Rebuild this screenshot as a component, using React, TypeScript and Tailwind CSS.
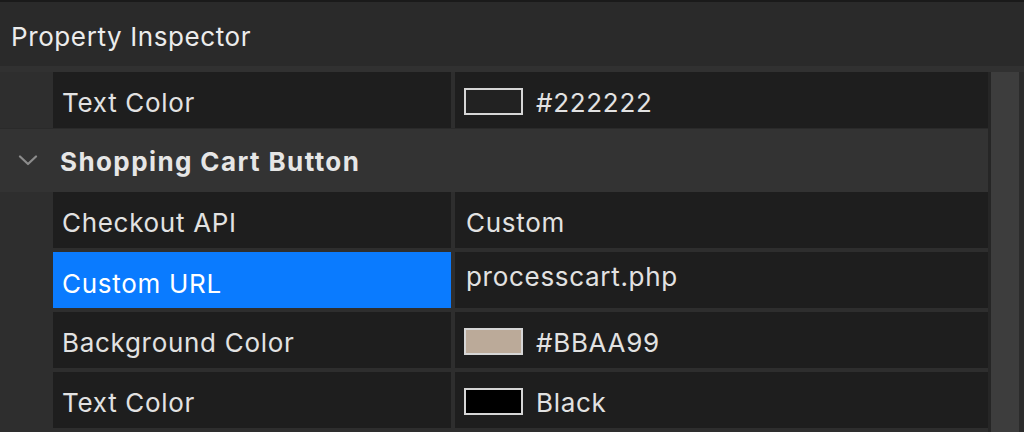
import React from 'react';

type Row = {
  label: string;
  value: string;
  swatch?: string;
  selected?: boolean;
};

const font = { fontFamily: 'Inter, "Noto Sans", sans-serif' };

function PropRow({ label, value, swatch, selected }: Row) {
  return (
    <div className="flex h-[56px]">
      <div className="w-[53px] shrink-0" />
      <div
        className={
          'w-[398px] shrink-0 flex items-center pl-[9px] text-[26px] tracking-[0.7px] ' +
          (selected ? 'bg-[#0a7bff] text-white pt-[6px]' : 'bg-[#1e1e1e] text-[#e2e2e2] pt-[5px]')
        }
      >
        {label}
      </div>
      <div className="w-[4px] shrink-0" />
      <div
        className={
          'flex-1 bg-[#1e1e1e] flex items-center pl-[9px] text-[26px] tracking-[0.7px] text-[#e2e2e2] ' +
          (selected ? 'pb-[8px]' : 'pt-[5px]')
        }
      >
        {swatch && (
          <span
            className="w-[59px] h-[27px] border-2 border-[#d6d6d6] mr-[13px] shrink-0 -mt-[3px]"
            style={{ backgroundColor: swatch }}
          />
        )}
        <span className={swatch ? '' : 'pl-[2px]'}>{value}</span>
      </div>
    </div>
  );
}

export default function App() {
  return (
    <div className="w-[1024px] h-[432px] overflow-hidden bg-[#2e2e2e] flex flex-col" style={font}>
      <div className="h-[2px] bg-[#1a1a1a] shrink-0" />
      <div className="h-[64px] bg-[#2a2a2a] flex items-center pl-[11px] text-[26px] tracking-[0.6px] text-[#ececec] shrink-0">
        <span className="pt-[4px]">Property Inspector</span>
      </div>
      <div className="h-[6px] bg-[#313131] shrink-0" />
      <div className="flex flex-1">
        <div className="w-[988px] flex flex-col">
          <PropRow label="Text Color" value="#222222" swatch="#222222" />
          <div className="h-[64px] bg-[#333333] flex items-center border-t border-[#2a2a2a]">
            <svg width="20" height="11" viewBox="0 0 20 11" className="ml-[18px] mr-[22px]">
              <path
                d="M2 1.5 L10 9 L18 1.5"
                fill="none"
                stroke="#8c8c8c"
                strokeWidth="2.2"
                strokeLinecap="round"
                strokeLinejoin="round"
              />
            </svg>
            <span className="text-[26px] font-bold tracking-[1.4px] text-[#e6e6e6] pt-[2px]">
              Shopping Cart Button
            </span>
          </div>
          <div className="flex flex-col gap-[4px]">
            <PropRow label="Checkout API" value="Custom" />
            <PropRow label="Custom URL" value="processcart.php" selected />
            <PropRow label="Background Color" value="#BBAA99" swatch="#bbaa99" />
            <PropRow label="Text Color" value="Black" swatch="#000000" />
          </div>
        </div>
        <div className="w-[3px] bg-[#262626]" />
        <div className="w-[28px] bg-[#3d3d3d]" />
        <div className="flex-1 bg-[#2b2b2b]" />
      </div>
    </div>
  );
}
